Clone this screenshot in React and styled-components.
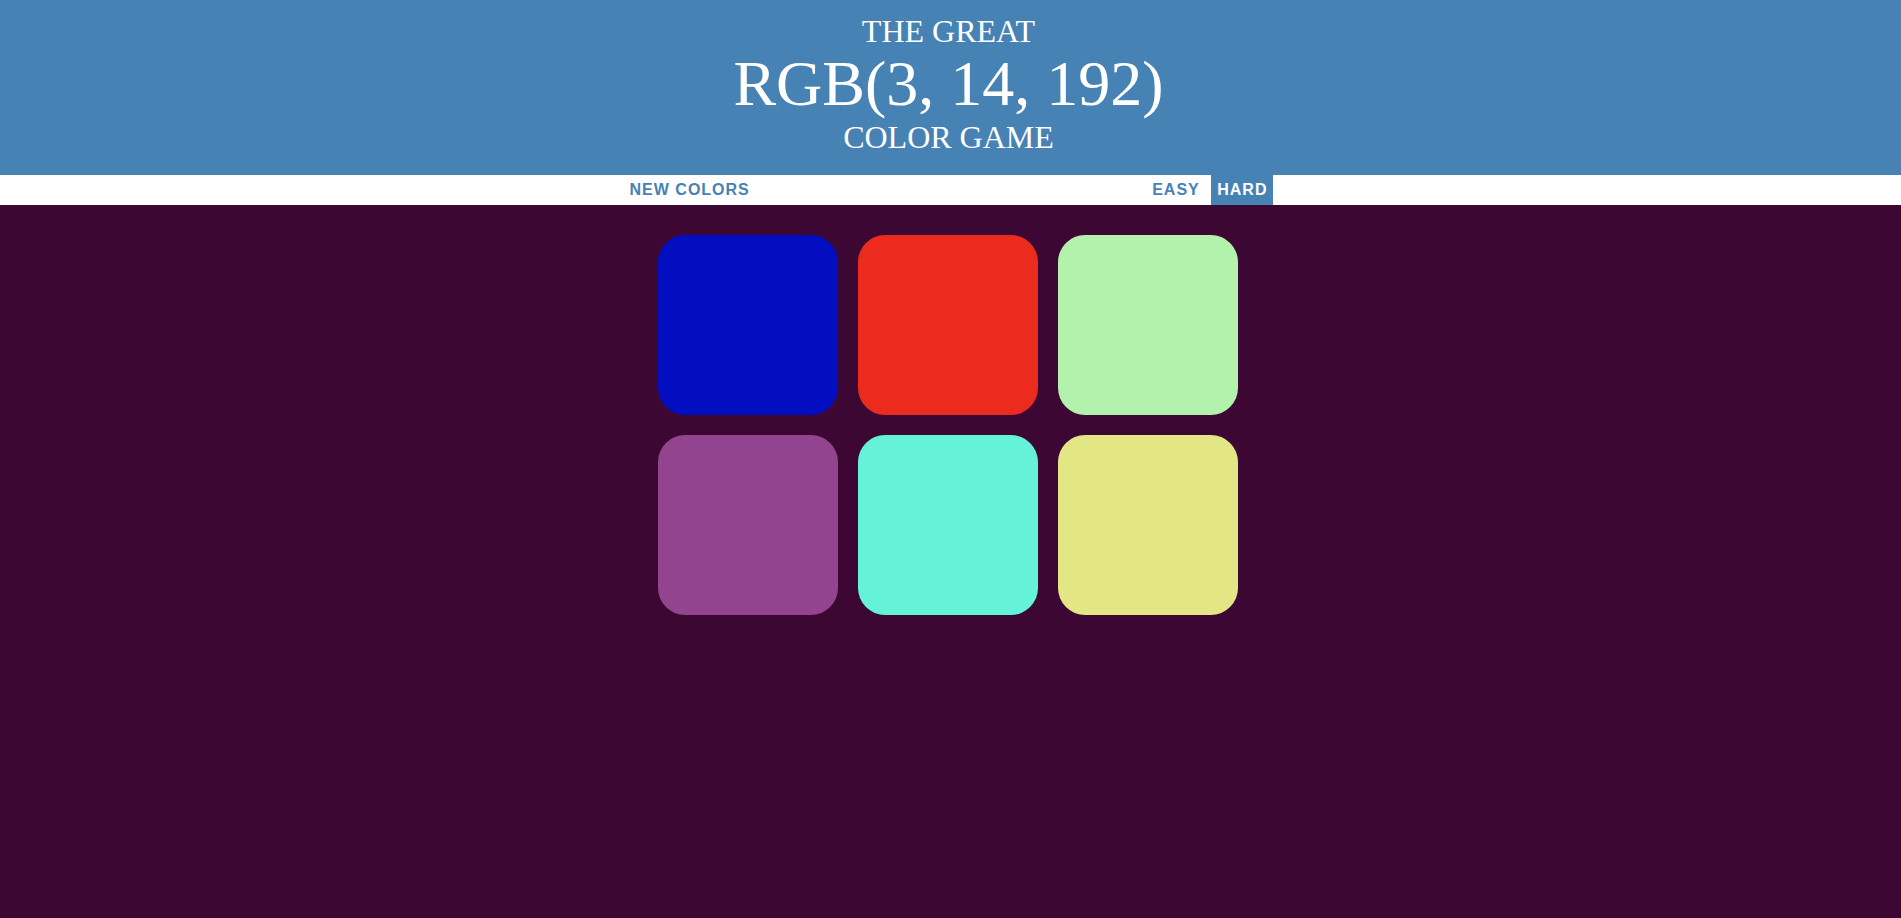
import React, { useState } from "react";
import styled, { createGlobalStyle } from "styled-components";

const GlobalStyle = createGlobalStyle`
  html, body {
    margin: 0;
    background-color: #3c0833;
    font-family: "Liberation Serif", "Times New Roman", serif;
  }
`;

const Title = styled.h1`
  margin: 0;
  padding: 14px 4px 20px 0;
  background: steelblue;
  color: white;
  text-align: center;
  text-transform: uppercase;
  font-weight: normal;
  font-size: 32px;
  line-height: 1.1;
`;

const ColorDisplay = styled.span`
  font-size: 200%;
`;

const Stripe = styled.div`
  display: flex;
  justify-content: center;
  align-items: stretch;
  gap: 5.5px;
  height: 30px;
  padding-right: 4px;
  background: white;
`;

const Message = styled.span`
  width: 20%;
`;

const StripeButton = styled.button`
  border: none;
  outline: none;
  margin: 0;
  padding: 1px 6px;
  height: 100%;
  background: ${p => (p.$selected ? "steelblue" : "none")};
  color: ${p => (p.$selected ? "white" : "steelblue")};
  font-family: "Liberation Sans", Arial, sans-serif;
  font-size: 16px;
  font-weight: 700;
  letter-spacing: 1px;
  text-transform: uppercase;
`;

const Main = styled.main`
  padding-right: 5px;
`;

const Board = styled.div`
  max-width: 600px;
  margin: 20px auto;
  display: flex;
  flex-wrap: wrap;
`;

const Square = styled.div`
  width: 180px;
  height: 180px;
  margin: 10px;
  border-radius: 27px;
  background: ${p => p.$color};
`;

const colors = [
  "rgb(3, 14, 192)",
  "rgb(236, 43, 31)",
  "rgb(179, 242, 172)",
  "rgb(146, 68, 142)",
  "rgb(100, 242, 217)",
  "rgb(226, 230, 133)"
];

const App = () => {
  const [mode, setMode] = useState("hard");

  return (
    <>
      <GlobalStyle />
      <Title>
        The Great
        <br />
        <ColorDisplay>RGB(3, 14, 192)</ColorDisplay>
        <br />
        Color Game
      </Title>
      <Stripe>
        <StripeButton>New Colors</StripeButton>
        <Message />
        <StripeButton $selected={mode === "easy"} onClick={() => setMode("easy")}>
          Easy
        </StripeButton>
        <StripeButton $selected={mode === "hard"} onClick={() => setMode("hard")}>
          Hard
        </StripeButton>
      </Stripe>
      <Main>
        <Board>
          {colors.map(color => (
            <Square key={color} $color={color} />
          ))}
        </Board>
      </Main>
    </>
  );
};

export default App;
